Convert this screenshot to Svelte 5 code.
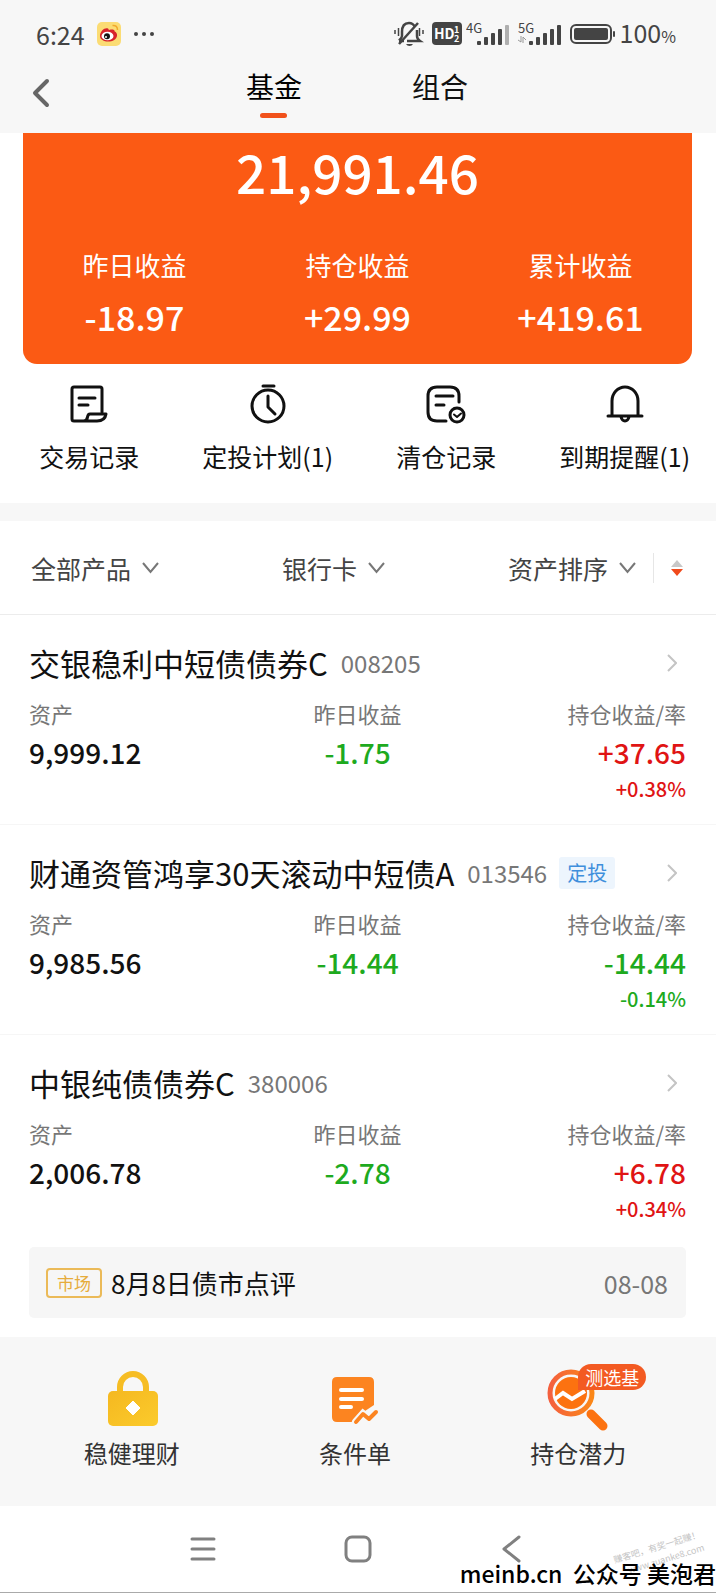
<script>
	const totals = [
		{ label: '昨日收益', value: '-18.97' },
		{ label: '持仓收益', value: '+29.99' },
		{ label: '累计收益', value: '+419.61' }
	];

	const shortcuts = [
		{ icon: 'record', label: '交易记录' },
		{ icon: 'timer', label: '定投计划(1)' },
		{ icon: 'cleared', label: '清仓记录' },
		{ icon: 'bell', label: '到期提醒(1)' }
	];

	const filters = ['全部产品', '银行卡', '资产排序'];

	const funds = [
		{ name: '交银稳利中短债债券C', code: '008205', asset: '9,999.12', day: '-1.75', hold: '+37.65', rate: '+0.38%' },
		{ name: '财通资管鸿享30天滚动中短债A', code: '013546', tag: '定投', asset: '9,985.56', day: '-14.44', hold: '-14.44', rate: '-0.14%' },
		{ name: '中银纯债债券C', code: '380006', asset: '2,006.78', day: '-2.78', hold: '+6.78', rate: '+0.34%',
			news: { tag: '市场', title: '8月8日债市点评', date: '08-08' } }
	];

	let tab = $state('基金');
	let descending = $state(true);

	function trend(value) {
		return value.startsWith('-') ? 'down' : 'up';
	}
</script>

{#snippet bars(faded)}
	<rect x="0" y="16" width="4" height="4" rx="1" />
	<rect x="7" y="12" width="4" height="8" rx="1" />
	<rect x="14" y="8" width="4" height="12" rx="1" />
	<rect x="21" y="4" width="4" height="16" rx="1" />
	<rect x="28" y="0" width="4" height="20" rx="1" opacity={faded ? 0.4 : 1} />
{/snippet}

<div class="page">
	<header>
		<div class="status">
			<span class="time">6:24</span>
			<svg class="weibo" width="24" height="24" viewBox="0 0 24 24">
				<rect width="24" height="24" rx="5" fill="#fbdc74" />
				<path d="M3 14C3 9 8 5 11 6.500c1 .5.7 1.500.7 1.500s6-2 6 1.500c3 1 3.500 6-.5 8.500C12 21 3 19.500 3 14z" fill="#d8232a" />
				<ellipse cx="10.500" cy="14" rx="6" ry="4.300" fill="#fff" />
				<circle cx="10" cy="14.300" r="3" fill="#151515" />
				<circle cx="9" cy="15" r="1" fill="#fff" />
				<path d="M15.500 3.500q5-.5 5 4.500" fill="none" stroke="#f0a92c" stroke-width="1.500" />
			</svg>
			<svg width="22" height="6" viewBox="0 0 22 6" fill="#444">
				<circle cx="3" cy="3" r="2" /><circle cx="11" cy="3" r="2" /><circle cx="19" cy="3" r="2" />
			</svg>
			<span class="spacer"></span>
			<svg width="30" height="26" viewBox="0 0 30 26" fill="none" stroke="#444" stroke-width="2.500">
				<path d="M5 20h5M21 6q-2-4-6-4-7 0-7 9v4q0 2-3 4.500M13 20h13q-3-2-3-5v-6" />
				<path d="M24 2L5 23" />
				<path d="M1 9v4M4.500 7v8M29 9v4M25.500 7v8" stroke-width="1.500" />
				<path d="M12 23h7q-1 2-3.500 2T12 23z" fill="#444" stroke="none" />
			</svg>
			<svg class="hd" width="30" height="24" viewBox="0 0 30 24">
				<rect width="30" height="23" rx="4" fill="#444" />
				<g fill="#fff" font-weight="700">
					<text x="2" y="17" font-size="14">HD</text>
					<text x="22" y="11" font-size="9">1</text>
					<text x="22" y="20" font-size="9">2</text>
				</g>
			</svg>
			<svg class="signal" width="44" height="32" viewBox="0 0 44 32" fill="#444">
				<text x="0" y="15" font-size="13">4G</text>
				<g transform="translate(11 7)">{@render bars(true)}</g>
			</svg>
			<svg class="signal" width="44" height="32" viewBox="0 0 44 32" fill="#444">
				<text x="0" y="15" font-size="13">5G</text>
				<path d="M0 22l3 2v-6M5 25v-6l3 3" fill="none" stroke="#999" />
				<g transform="translate(11 7)">{@render bars(false)}</g>
			</svg>
			<svg class="battery" width="46" height="20" viewBox="0 0 46 20">
				<rect x="1" y="1" width="40" height="18" rx="5" fill="none" stroke="#444" stroke-width="2" />
				<rect x="4" y="4" width="34" height="12" rx="2" fill="#444" />
				<rect x="43" y="7" width="2" height="6" rx="1" fill="#444" />
			</svg>
			<span class="time">100<small>%</small></span>
		</div>
		<nav class="tabs">
			<button class="back" aria-label="返回">
				<svg width="18" height="30" viewBox="0 0 18 30" fill="none" stroke="#666" stroke-width="4" stroke-linecap="round" stroke-linejoin="round">
					<path d="M15 3L3 15l12 12" />
				</svg>
			</button>
			{#each ['基金', '组合'] as name}
				<button class="tab" class:active={tab === name} onclick={() => (tab = name)}>{name}</button>
			{/each}
		</nav>
	</header>

	<section class="summary">
		<div class="total">21,991.46</div>
		<div class="totals">
			{#each totals as item}
				<div>
					<div class="totals-label">{item.label}</div>
					<div class="totals-value">{item.value}</div>
				</div>
			{/each}
		</div>
	</section>

	<nav class="shortcuts">
		{#each shortcuts as item}
			<a href="#{item.icon}">
				<svg width="40" height="40" viewBox="0 0 40 40" fill="none" stroke="#111" stroke-width="3" stroke-linecap="round" stroke-linejoin="round">
					{#if item.icon === 'record'}
						<path d="M33 28V5q0-2-2-2H5q-2 0-2 2v30q0 2 2 2h23q8 0 9-7H21q-2 0-2.500 3-.5 4-4 4" />
						<path d="M10 14h16M10 21h9" />
					{:else if item.icon === 'timer'}
						<circle cx="20" cy="22" r="16" />
						<path d="M15 2h11M20 12v11l7 7" />
					{:else if item.icon === 'cleared'}
						<path d="M33 18v-6q0-9-9-9H11q-9 0-9 9v16q0 9 9 9h9" />
						<path d="M10 12h17M10 21h8" />
						<circle cx="31" cy="31" r="7" />
						<path d="M28 30.500l3 2.500 4-3.500" stroke-width="2" />
					{:else}
						<path d="M7 32V17a13 14 0 0 1 26 0v15M3 32h34M16 33q1 4 4 4t4-4" />
					{/if}
				</svg>
				<span>{item.label}</span>
			</a>
		{/each}
	</nav>

	<div class="filters">
		{#each filters as name}
			<label class="filter">
				<select aria-label={name}>
					<option>{name}</option>
				</select>
				<svg width="17" height="12" viewBox="0 0 17 12" fill="none" stroke="#777" stroke-width="2">
					<path d="M1 1l7.500 9L16 1" />
				</svg>
			</label>
		{/each}
		<button class="sort" aria-label="切换排序" onclick={() => (descending = !descending)}>
			<svg width="12" height="16" viewBox="0 0 12 16">
				<path d="M6 0l6 7H0z" fill={descending ? '#c8c8c8' : '#f04a1c'} />
				<path d="M6 16l6-7H0z" fill={descending ? '#f04a1c' : '#c8c8c8'} />
			</svg>
		</button>
	</div>

	{#each funds as fund}
		<article class="fund">
			<a class="fund-head" href="#{fund.code}">
				<span class="name">{fund.name}</span>
				<span class="code">{fund.code}</span>
				{#if fund.tag}<span class="plan">{fund.tag}</span>{/if}
				<svg class="more" width="10" height="18" viewBox="0 0 10 18" fill="none" stroke="#c4c4c4" stroke-width="2">
					<path d="M1 1l8 8-8 8" />
				</svg>
			</a>
			<div class="figures">
				<div>
					<div class="label">资产</div>
					<div class="value">{fund.asset}</div>
				</div>
				<div>
					<div class="label">昨日收益</div>
					<div class="value {trend(fund.day)}">{fund.day}</div>
				</div>
				<div>
					<div class="label">持仓收益/率</div>
					<div class="value {trend(fund.hold)}">{fund.hold}</div>
					<div class="rate {trend(fund.rate)}">{fund.rate}</div>
				</div>
			</div>
			{#if fund.news}
				<a class="news" href="#news">
					<span class="news-tag">{fund.news.tag}</span>
					<span class="news-title">{fund.news.title}</span>
					<span class="news-date">{fund.news.date}</span>
				</a>
			{/if}
		</article>
	{/each}

	<nav class="tools">
		<a href="#steady">
			<svg width="64" height="64" viewBox="0 0 64 64">
				<defs>
					<linearGradient id="gold" x1="0" y1="0" x2="1" y2="1">
						<stop offset="0" stop-color="#f5b820" /><stop offset="1" stop-color="#fbcb2c" />
					</linearGradient>
				</defs>
				<path d="M20 28V18a13 13 0 0 1 26 0v10" fill="none" stroke="#f6bd24" stroke-width="6" />
				<rect x="8" y="22" width="50" height="35" rx="5" fill="url(#gold)" />
				<path d="M33 32l7 7-7 7-7-7z" fill="#fff" stroke="#fff" stroke-linejoin="round" />
			</svg>
			<span>稳健理财</span>
		</a>
		<a href="#order">
			<svg width="64" height="64" viewBox="0 0 64 64">
				<path d="M14 8h32q5 0 5 5v23L39 44 31 53H14q-5 0-5-5V13q0-5 5-5z" fill="#fc8420" />
				<path d="M18 21h21M18 30h21M18 38h10" stroke="#fff" stroke-width="4" stroke-linecap="round" />
				<path d="M33 53l7-8 6 5 7-7" fill="none" stroke="#f7f7f7" stroke-width="8" stroke-linecap="round" />
				<path d="M33 53l7-8 6 5 7-7" fill="none" stroke="#fc8420" stroke-width="4" stroke-linecap="round" stroke-linejoin="round" />
			</svg>
			<span>条件单</span>
		</a>
		<a href="#potential">
			<svg width="64" height="64" viewBox="0 0 64 64">
				<defs>
					<linearGradient id="lens"><stop offset="0" stop-color="#f4603e" /><stop offset="1" stop-color="#fb8718" /></linearGradient>
				</defs>
				<circle cx="25" cy="24" r="21" fill="none" stroke="url(#lens)" stroke-width="5" />
				<circle cx="25" cy="24" r="16" fill="#fc7210" />
				<path d="M9 30l8-6 9 6 13-8" fill="none" stroke="#fff" stroke-width="4" />
				<path d="M45 45l12 12" stroke="#fc7210" stroke-width="9" stroke-linecap="round" />
			</svg>
			<em>测选基</em>
			<span>持仓潜力</span>
		</a>
	</nav>

	<footer>
		<button aria-label="菜单">
			<svg width="28" height="28" viewBox="0 0 28 28" fill="none" stroke="#808080" stroke-width="3" stroke-linecap="round">
				<path d="M3 4h22M3 14h22M3 24h22" />
			</svg>
		</button>
		<button aria-label="主屏幕">
			<svg width="28" height="28" viewBox="0 0 28 28" fill="none" stroke="#808080" stroke-width="3">
				<rect x="2" y="2" width="24" height="24" rx="6" />
			</svg>
		</button>
		<button aria-label="后退">
			<svg width="28" height="28" viewBox="0 0 28 28" fill="none" stroke="#808080" stroke-width="3" stroke-linecap="round" stroke-linejoin="round">
				<path d="M21 2L6 14l15 12" />
			</svg>
		</button>
		<div class="stamp">赚客吧，有奖一起赚！<br />www.zuanke8.com</div>
		<div class="credit">meinb.cn&nbsp; 公众号 美泡君</div>
	</footer>
</div>

<style>
	:global(body) {
		margin: 0;
		background: #fff;
	}
	.page {
		font-family: "Noto Sans CJK SC", sans-serif;
		color: #111;
	}
	.page :global(*) {
		box-sizing: border-box;
	}
	svg {
		display: block;
		flex: none;
	}
	a {
		color: inherit;
		text-decoration: none;
	}
	button {
		border: 0;
		padding: 0;
		background: none;
		font: inherit;
		color: inherit;
		cursor: pointer;
	}
	header {
		height: 133px;
		background: #f7f7f7;
	}
	.status {
		display: flex;
		align-items: center;
		height: 68px;
		padding: 0 40px 0 36px;
		color: #444;
	}
	.time {
		font-size: 25px;
		line-height: 32px;
	}
	.time small {
		font-size: 16px;
	}
	.weibo {
		margin: 0 12px;
	}
	.spacer {
		flex: 1;
	}
	.hd {
		margin: 0 4px 0 8px;
	}
	.signal {
		margin-right: 8px;
	}
	.battery {
		margin-right: 4px;
	}
	.tabs {
		position: relative;
		display: flex;
		justify-content: center;
		gap: 110px;
		height: 60px;
		padding-right: 2px;
	}
	.back {
		position: absolute;
		left: 32px;
		top: 10px;
	}
	.tab {
		display: flex;
		flex-direction: column;
		align-items: center;
		font-size: 28px;
		line-height: 36px;
	}
	.tab.active {
		color: #000;
	}
	.tab.active::after {
		content: "";
		width: 27px;
		height: 5px;
		margin-top: 9px;
		border-radius: 3px;
		background: #f1511b;
	}
	.summary {
		height: 231px;
		margin: 0 24px 0 23px;
		padding-top: 8px;
		border-radius: 0 0 14px 14px;
		background: #fb5a14;
		color: #fff;
		text-align: center;
	}
	.total {
		font-size: 53px;
		font-weight: 500;
		line-height: 60px;
	}
	.totals {
		display: grid;
		grid-template-columns: repeat(3, 1fr);
		margin-top: 46px;
	}
	.totals-label {
		font-size: 26px;
		line-height: 36px;
	}
	.totals-value {
		margin-top: 16px;
		font-size: 34px;
		font-weight: 500;
		line-height: 36px;
	}
	.shortcuts {
		display: grid;
		grid-template-columns: repeat(4, 1fr);
		padding: 20px 2px 29px 0;
		border-bottom: 18px solid #f7f7f7;
	}
	.shortcuts a {
		display: flex;
		flex-direction: column;
		align-items: center;
		gap: 14px;
		font-size: 25px;
		line-height: 36px;
		white-space: nowrap;
	}
	.filters {
		display: flex;
		align-items: center;
		height: 94px;
		padding: 0 33px 0 31px;
		border-bottom: 1px solid #ececec;
		color: #444;
	}
	.filter {
		display: flex;
		align-items: center;
		gap: 10px;
	}
	.filter:nth-of-type(2) {
		margin: 0 auto;
	}
	select {
		appearance: none;
		border: 0;
		padding: 0;
		background: none;
		color: inherit;
		font: inherit;
		font-size: 25px;
		line-height: 36px;
	}
	.sort {
		margin-left: 17px;
		padding: 7px 0 7px 17px;
		border-left: 1px solid #e6e6e6;
	}
	.fund {
		padding: 28px 30px 19px 29px;
		border-bottom: 1px solid #f6f6f6;
	}
	.fund:last-of-type {
		border-bottom: 0;
	}
	.fund-head {
		display: flex;
		align-items: center;
		height: 40px;
		white-space: nowrap;
	}
	.name {
		font-size: 31px;
		line-height: 40px;
	}
	.code {
		margin-left: 13px;
		color: #777;
		font-size: 24px;
		line-height: 36px;
	}
	.plan {
		margin-left: 12px;
		padding: 0 8px;
		border-radius: 3px;
		background: #edf5fd;
		color: #3f8fdc;
		font-size: 20px;
		line-height: 32px;
	}
	.more {
		margin-left: auto;
		margin-right: 9px;
	}
	.figures {
		display: grid;
		grid-template-columns: repeat(3, 1fr);
		margin-top: 14px;
		text-align: center;
	}
	.figures > :first-child {
		text-align: left;
	}
	.figures > :last-child {
		text-align: right;
	}
	.label {
		color: #777;
		font-size: 22px;
		line-height: 32px;
	}
	.value {
		margin-top: 5px;
		font-size: 28px;
		font-weight: 500;
		line-height: 36px;
	}
	.rate {
		margin-top: 3px;
		font-size: 20px;
		font-weight: 500;
		line-height: 32px;
	}
	.up {
		color: #e01414;
	}
	.down {
		color: #1eaa1e;
	}
	.news {
		display: flex;
		align-items: center;
		height: 71px;
		margin-top: 22px;
		padding: 0 18px 0 17px;
		border-radius: 5px;
		background: #f6f6f6;
	}
	.news-tag {
		padding: 0 9px;
		border: 2px solid #ebba58;
		border-radius: 4px;
		color: #e6ac3c;
		font-size: 17px;
		line-height: 26px;
	}
	.news-title {
		margin-left: 9px;
		font-size: 26px;
		line-height: 36px;
	}
	.news-date {
		margin-left: auto;
		color: #777;
		font-size: 25px;
		line-height: 36px;
	}
	.tools {
		display: grid;
		grid-template-columns: repeat(3, 1fr);
		height: 169px;
		padding: 32px 26px 0 20px;
		background: #f7f7f7;
		color: #333;
	}
	.tools a {
		position: relative;
		display: flex;
		flex-direction: column;
		align-items: center;
		gap: 2px;
		font-size: 24px;
		line-height: 36px;
	}
	.tools em {
		position: absolute;
		top: -5px;
		left: 50%;
		padding: 0 7px;
		border-radius: 13px 13px 13px 0;
		background: #f35a22;
		color: #fff;
		font-size: 18px;
		font-style: normal;
		line-height: 26px;
	}
	footer {
		position: relative;
		display: flex;
		justify-content: space-between;
		height: 87px;
		padding: 0 190px 0 189px;
		border-bottom: 1px solid #aaa;
	}
	.credit {
		position: absolute;
		right: 0;
		bottom: 1px;
		color: #000;
		font-size: 23px;
		font-weight: 500;
		line-height: 36px;
		white-space: nowrap;
	}
	.stamp {
		position: absolute;
		right: 12px;
		bottom: 24px;
		color: #c4c4c4;
		font-size: 9px;
		line-height: 14px;
		text-align: right;
		white-space: nowrap;
		transform: rotate(-17deg);
	}
</style>
